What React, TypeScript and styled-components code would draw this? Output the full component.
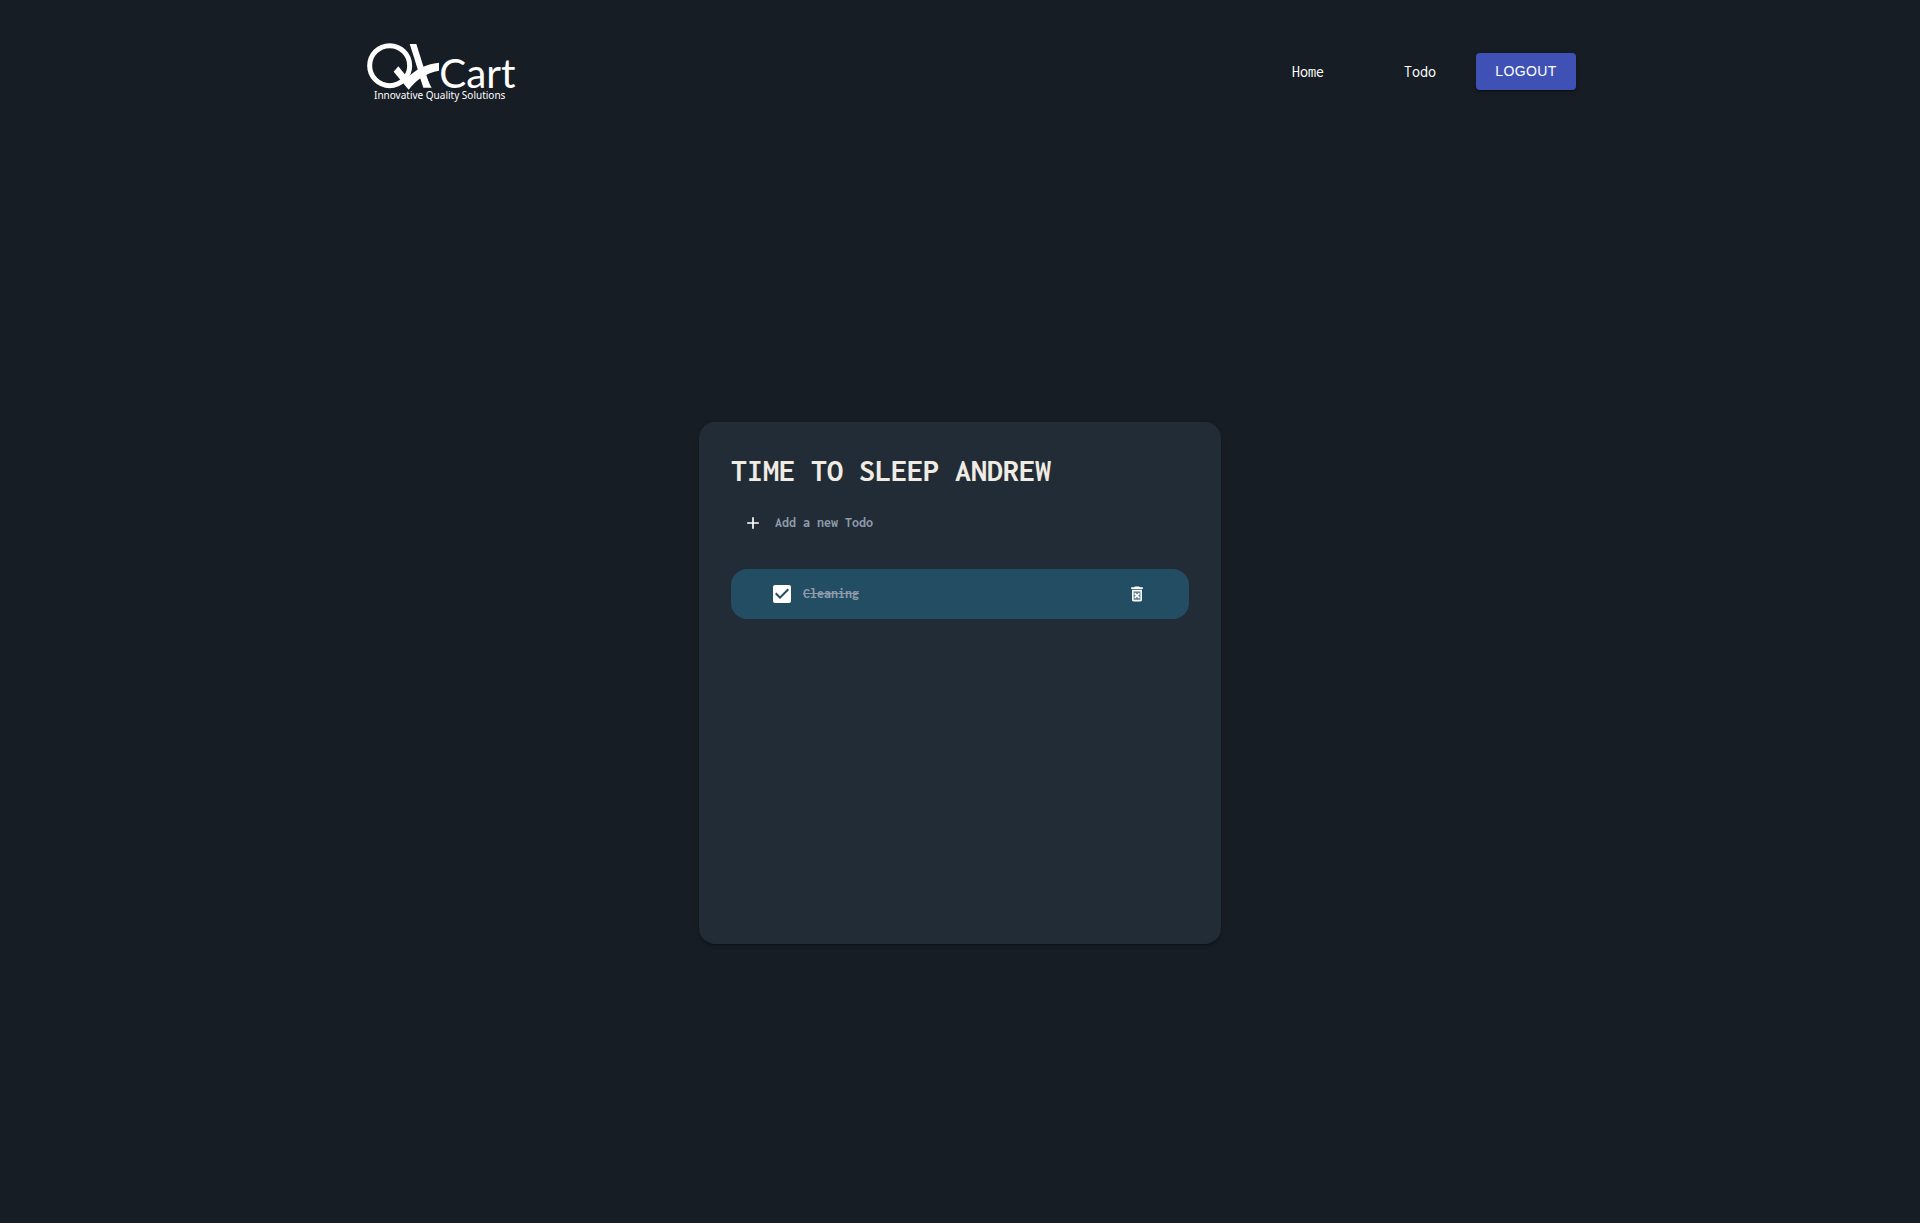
import React, { useState } from "react";
import styled, { createGlobalStyle } from "styled-components";
import { MdAdd } from "react-icons/md";

const mono = `Inconsolata, "Noto Sans Mono CJK JP", "Noto Sans Mono CJK SC", "Liberation Mono", monospace`;

const colors = {
  page: "#171d24",
  card: "#222c36",
  item: "#234d62",
  primary: "#3f51b5",
  heading: "#f0ece3",
  muted: "#8d9bab",
};

const GlobalStyle = createGlobalStyle`
  *, *::before, *::after { box-sizing: border-box; }
  body {
    margin: 0;
    background: ${colors.page};
    color: #fff;
    font-family: ${mono};
    font-size: 16px;
  }
`;

const Page = styled.div`
  display: flex;
  flex-direction: column;
  min-height: 100vh;
`;

const Header = styled.header`
  display: flex;
  align-items: center;
  justify-content: space-between;
  width: 100%;
  max-width: 1280px;
  margin: 0 auto;
  padding: 41px 24px;
`;

const LogoLink = styled.a`
  display: flex;
  padding-left: 23px;
  color: #fff;
`;

const LogoSvg = styled.svg`
  overflow: visible;
`;

const Nav = styled.nav`
  display: flex;
  align-items: center;
`;

const NavLink = styled.a`
  margin: 0 40px;
  color: #fff;
  text-decoration: none;
  line-height: 20px;
`;

const LogoutButton = styled.button`
  width: 100px;
  height: 37px;
  padding: 0 0 1px;
  border: 0;
  border-radius: 4px;
  background: ${colors.primary};
  color: #fff;
  font: 400 14px/24px "Liberation Sans", sans-serif;
  letter-spacing: 0.4px;
  text-transform: uppercase;
  box-shadow: 0 3px 1px -2px rgba(0, 0, 0, 0.2), 0 2px 2px rgba(0, 0, 0, 0.14),
    0 1px 5px rgba(0, 0, 0, 0.12);
  cursor: pointer;
`;

const Main = styled.main`
  display: flex;
  flex: 1;
  align-items: center;
  justify-content: center;
`;

const Card = styled.section`
  width: 100%;
  max-width: 522px;
  min-height: 522px;
  padding: 32px;
  border-radius: 16px;
  background: ${colors.card};
  box-shadow: 0 3px 1px -2px rgba(0, 0, 0, 0.2), 0 2px 2px rgba(0, 0, 0, 0.14),
    0 1px 5px rgba(0, 0, 0, 0.12);
`;

const Title = styled.h1`
  margin: 0 0 14px;
  color: ${colors.heading};
  font-size: 32px;
  font-weight: 700;
  line-height: 33px;
  text-transform: uppercase;
  white-space: nowrap;
`;

const AddForm = styled.form`
  display: flex;
  align-items: center;
  margin-bottom: 24px;
`;

const IconButton = styled.button`
  display: flex;
  padding: 12px;
  border: 0;
  background: none;
  color: #fff;
  font-size: 20px;
  cursor: pointer;
`;

const TodoInput = styled.input`
  flex: 1;
  min-width: 0;
  padding: 0;
  border: 0;
  outline: 0;
  background: none;
  color: ${colors.heading};
  font: 700 14px/20px ${mono};

  &::placeholder {
    color: ${colors.muted};
    opacity: 1;
  }
`;

const List = styled.ul`
  display: grid;
  gap: 16px;
  margin: 0;
  padding: 0;
  list-style: none;
`;

const Item = styled.li`
  display: flex;
  align-items: center;
  justify-content: space-between;
  height: 50px;
  padding: 0 30px;
  border-radius: 16px;
  background: ${colors.item};
`;

const ItemLabel = styled.label<{ $done: boolean }>`
  display: flex;
  align-items: center;
  gap: 12px;
  padding-left: 12px;
  color: ${(p) => (p.$done ? colors.muted : colors.heading)};
  font-size: 14px;
  font-weight: 700;
  line-height: 20px;
  text-decoration: ${(p) => (p.$done ? "line-through" : "none")};
  cursor: pointer;
`;

const CheckBoxWrap = styled.span`
  display: grid;
  width: 18px;
  height: 18px;

  & > * {
    grid-area: 1 / 1;
  }
`;

const CheckBox = styled.input`
  appearance: none;
  width: 18px;
  height: 18px;
  margin: 0;
  border: 2px solid #fff;
  border-radius: 2px;

  &:checked {
    background: #fff;
  }
`;

const CheckMark = styled.svg`
  pointer-events: none;
  fill: ${colors.item};
`;

function Logo() {
  return (
    <LogoSvg width="148" height="61" viewBox="36 33 444 183" fill="currentColor" role="img" aria-label="QkCart">
      <circle cx="104" cy="107" r="60" fill="none" stroke="currentColor" strokeWidth="15" />
      <path d="M164 42H184C193 70 204 106 213 132C218 148 223 162 230 173H205C195 144 185 105 164 42Z" />
      <path d="M130 109L116 125L161 179C183 149 213 129 252 122V98C212 102 181 119 158 143Z" />
      <text x="253" y="173" fontFamily="Lato, sans-serif" fontSize="121">Cart</text>
      <text x="57" y="206" fontFamily='"Noto Sans", sans-serif' fontSize="30">Innovative Quality Solutions</text>
    </LogoSvg>
  );
}

function TrashIcon() {
  return (
    <svg width="20" height="20" viewBox="0 0 24 24" fill="currentColor" aria-hidden="true">
      <path d="M8 9h8v10H8z" opacity="0.3" />
      <path d="M6 19c0 1.100.9 2 2 2h8c1.100 0 2-.9 2-2V7H6v12zM8 9h8v10H8V9zm7.500-5l-1-1h-5l-1 1H5v2h14V4z" />
      <path d="M8.460 11.880l1.410-1.410L12 12.590l2.120-2.120 1.410 1.410L13.410 14l2.120 2.120-1.410 1.410L12 15.410l-2.120 2.120-1.410-1.410L10.590 14z" />
    </svg>
  );
}

export default function App() {
  const [todos, setTodos] = useState([{ id: 1, text: "Cleaning", done: true }]);
  const [draft, setDraft] = useState("");

  const addTodo = (event: React.FormEvent) => {
    event.preventDefault();
    const text = draft.trim();
    if (!text) return;
    setTodos([...todos, { id: Date.now(), text, done: false }]);
    setDraft("");
  };

  const toggle = (id: number) =>
    setTodos(todos.map((t) => (t.id === id ? { ...t, done: !t.done } : t)));

  return (
    <>
      <GlobalStyle />
      <Page>
        <Header>
          <LogoLink href="#">
            <Logo />
          </LogoLink>
          <Nav>
            <NavLink href="#home">Home</NavLink>
            <NavLink href="#todo">Todo</NavLink>
            <LogoutButton type="button">Logout</LogoutButton>
          </Nav>
        </Header>
        <Main>
          <Card>
            <Title>Time to sleep Andrew</Title>
            <AddForm onSubmit={addTodo}>
              <IconButton type="submit" aria-label="Add">
                <MdAdd />
              </IconButton>
              <TodoInput
                aria-label="Add a new Todo"
                placeholder="Add a new Todo"
                value={draft}
                onChange={(e) => setDraft(e.target.value)}
              />
            </AddForm>
            <List>
              {todos.map((todo) => (
                <Item key={todo.id}>
                  <ItemLabel $done={todo.done}>
                    <CheckBoxWrap>
                      <CheckBox type="checkbox" checked={todo.done} onChange={() => toggle(todo.id)} />
                      {todo.done && (
                        <CheckMark width="18" height="18" viewBox="3 3 18 18" aria-hidden="true">
                          <path d="M10 17l-5-5 1.410-1.410L10 14.170l7.590-7.590L19 8l-9 9z" />
                        </CheckMark>
                      )}
                    </CheckBoxWrap>
                    <span>{todo.text}</span>
                  </ItemLabel>
                  <IconButton
                    type="button"
                    aria-label={`Delete ${todo.text}`}
                    onClick={() => setTodos(todos.filter((t) => t.id !== todo.id))}
                  >
                    <TrashIcon />
                  </IconButton>
                </Item>
              ))}
            </List>
          </Card>
        </Main>
      </Page>
    </>
  );
}
